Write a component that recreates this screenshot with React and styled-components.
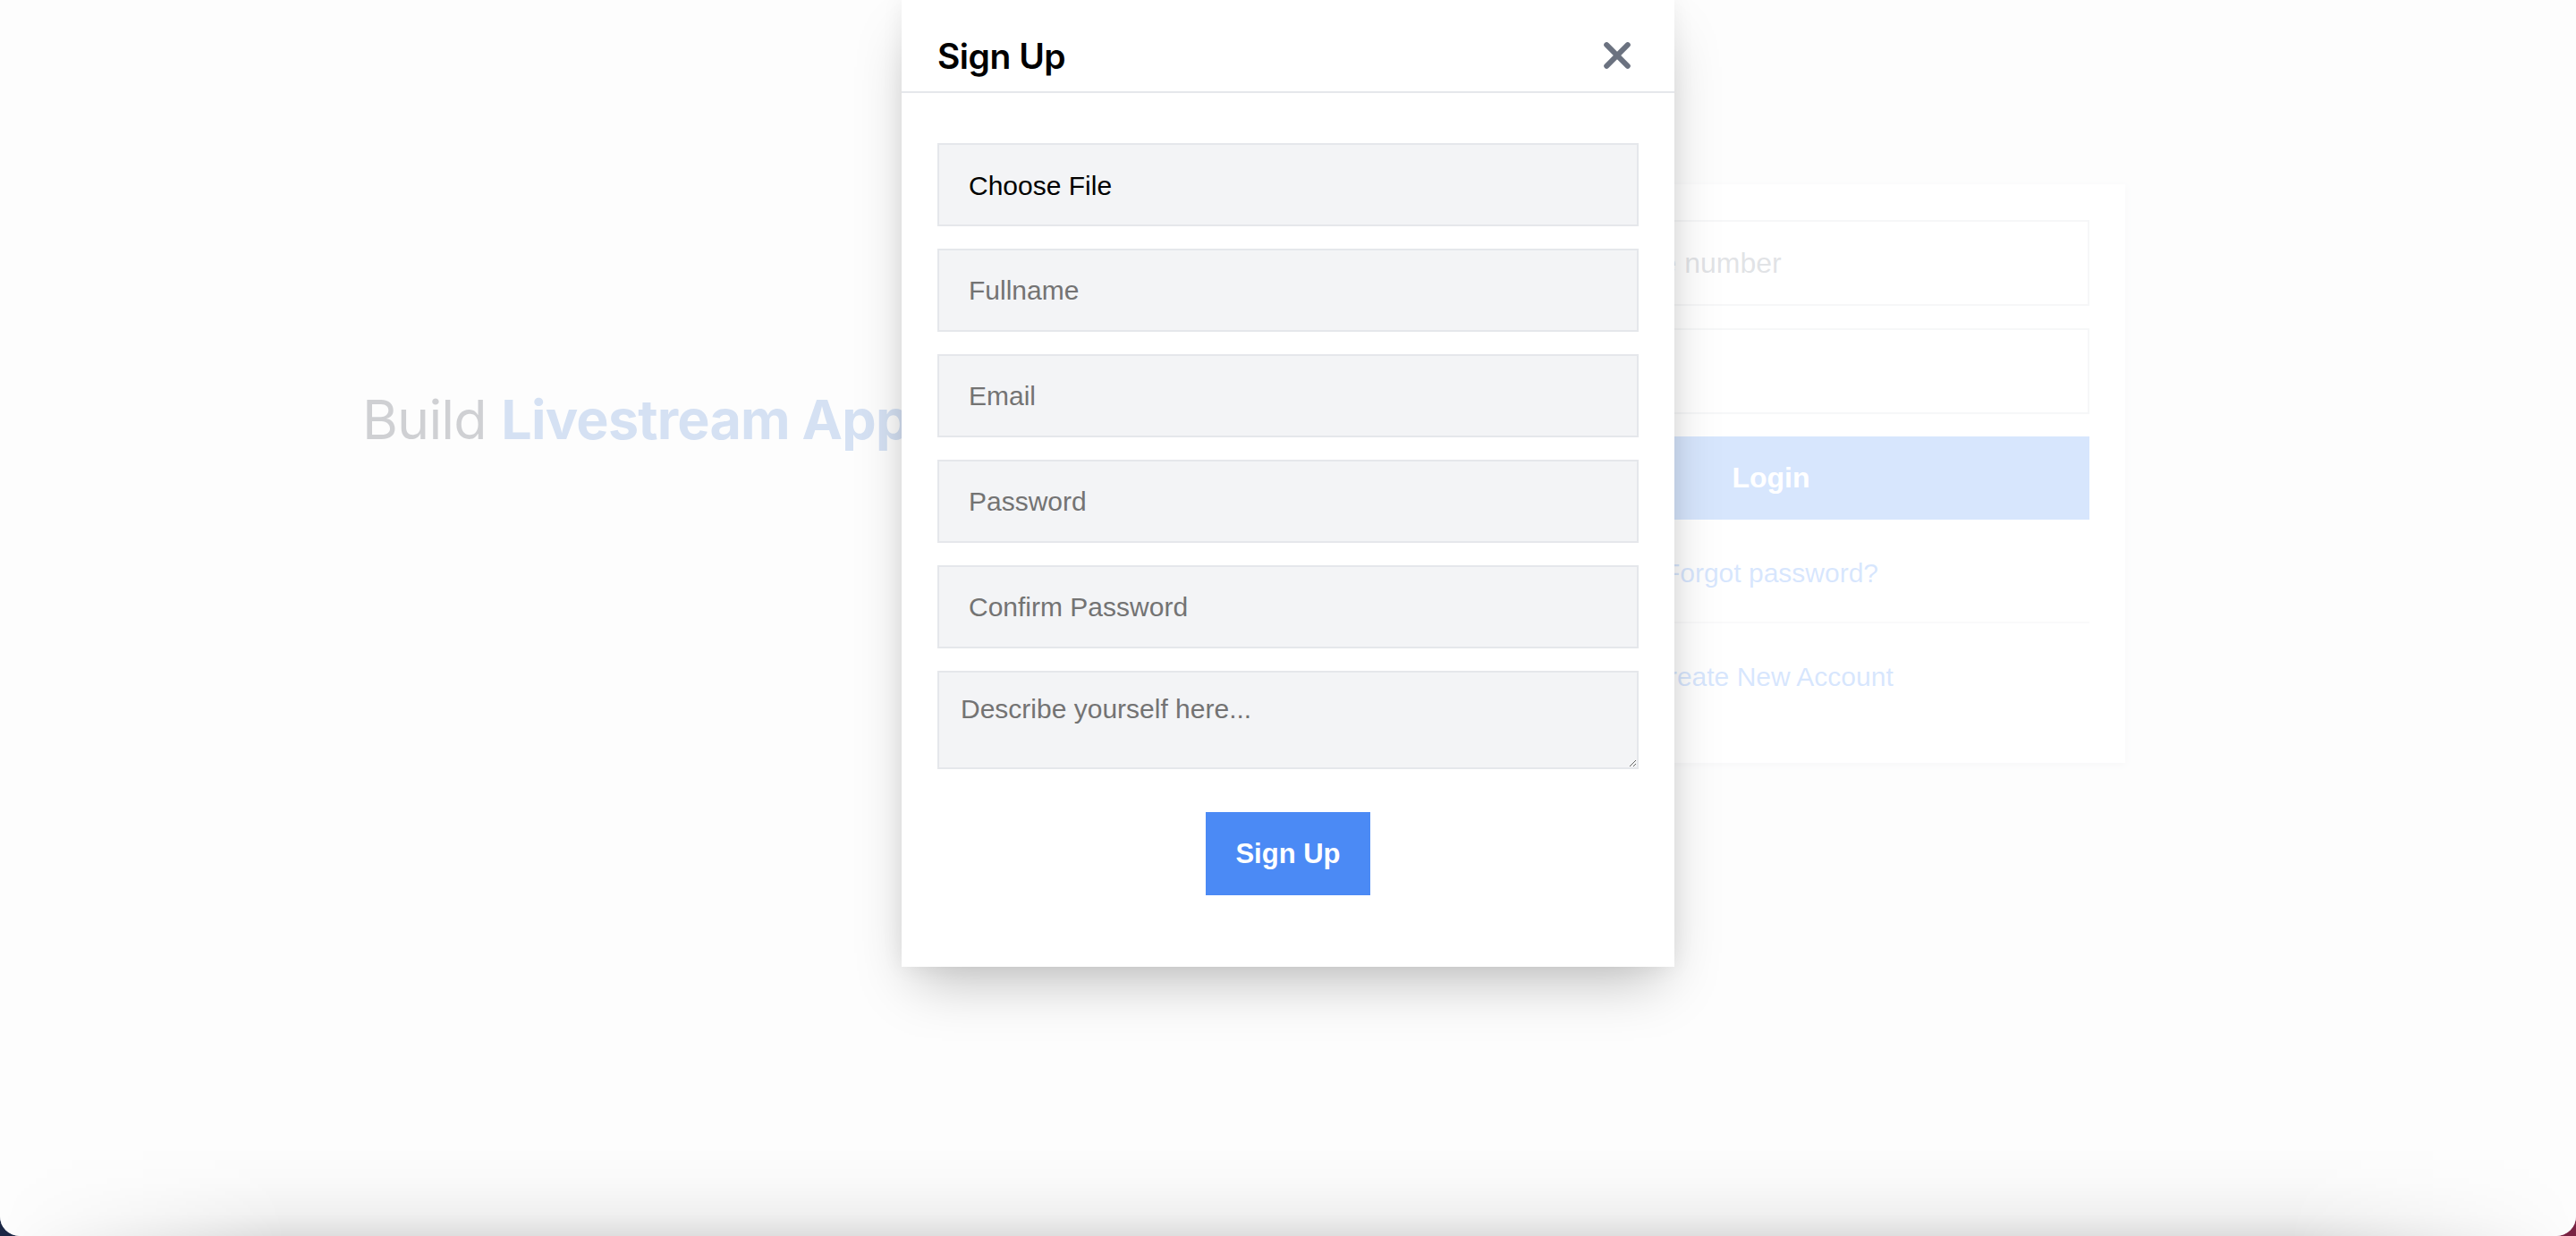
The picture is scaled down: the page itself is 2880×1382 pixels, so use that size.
import React from 'react';
import styled, { createGlobalStyle, css } from 'styled-components';

const GlobalStyle = createGlobalStyle`
  html, body {
    margin: 0;
    padding: 0;
  }
  body {
    background: linear-gradient(to right, #1b2745 0%, #1b2745 50%, #7a2343 50%, #7a2343 100%);
    font-family: "Liberation Sans", Arial, sans-serif;
    overflow: hidden;
  }
  *, *::before, *::after {
    box-sizing: border-box;
  }
`;

const Window = styled.div`
  position: relative;
  width: 2880px;
  height: 1382px;
  border-radius: 0 0 22px 22px;
  overflow: hidden;
  background: #f3f4f6;
`;

/* ---------- underlying landing page ---------- */

const Landing = styled.main`
  display: flex;
  align-items: flex-start;
  justify-content: space-between;
  height: 100%;
  padding: 206px 504px 0 405px;
`;

const Hero = styled.h1`
  margin: 233px 0 0;
  font-family: Inter, "Liberation Sans", sans-serif;
  font-size: 61px;
  line-height: 1;
  font-weight: 400;
  letter-spacing: -0.8px;
  color: #111827;
  white-space: nowrap;
`;

const HeroAccent = styled.span`
  font-weight: 700;
  color: #2d69c3;
`;

const LoginCard = styled.section`
  width: 792px;
  background: #fff;
  padding: 40px 40px 78px;
  box-shadow: 0 2px 8px rgba(0, 0, 0, 0.12);
  display: flex;
  flex-direction: column;
`;

const LoginInput = styled.input`
  height: 96px;
  width: 100%;
  border: 2px solid #d1d5db;
  background: #fff;
  padding: 0 33px;
  font-family: "Liberation Sans", Arial, sans-serif;
  font-size: 32px;
  margin-bottom: 25px;
  outline: none;
  &::placeholder {
    color: #6b7280;
  }
`;

const LoginButton = styled.button`
  height: 93px;
  width: 100%;
  border: none;
  background: #3b82f6;
  color: #fff;
  font-family: "Liberation Sans", Arial, sans-serif;
  font-weight: 700;
  font-size: 32px;
`;

const CardLink = styled.a`
  display: block;
  text-align: center;
  color: #3b82f6;
  font-size: 30px;
  line-height: 37px;
  margin-top: ${(p) => p.$top}px;
  text-decoration: none;
`;

const Divider = styled.hr`
  border: none;
  border-top: 2px solid #e5e7eb;
  margin: 36px 0 0;
`;

/* ---------- overlay + modal ---------- */

const Overlay = styled.div`
  position: absolute;
  inset: 0;
  background: rgba(255, 255, 255, 0.8);
  display: flex;
  justify-content: center;
  align-items: flex-start;
`;

const Modal = styled.div`
  width: 864px;
  background: #fff;
  box-shadow: 0 30px 60px -15px rgba(0, 0, 0, 0.25), 0 0 24px rgba(0, 0, 0, 0.06);
`;

const ModalHeader = styled.header`
  display: flex;
  align-items: center;
  justify-content: space-between;
  height: 104px;
  padding: 22px 49px 0 40px;
  border-bottom: 2px solid #e5e7eb;
`;

const ModalTitle = styled.h2`
  margin: 0;
  font-family: Inter, "Liberation Sans", sans-serif;
  font-weight: 600;
  font-size: 39px;
  line-height: 1;
  letter-spacing: -0.5px;
  color: #000;
`;

const CloseButton = styled.button`
  display: flex;
  padding: 0;
  border: none;
  background: none;
  cursor: pointer;
`;

const Form = styled.form`
  display: flex;
  flex-direction: column;
  gap: 25px;
  padding: 56px 40px 80px;
`;

const fieldBase = css`
  width: 100%;
  border: 2px solid #e5e7eb;
  background: #f3f4f6;
  font-family: "Liberation Sans", Arial, sans-serif;
  font-size: 30px;
  outline: none;
  &::placeholder {
    color: #737373;
  }
`;

const Field = styled.input`
  ${fieldBase};
  height: 93px;
  padding: 0 33px;
  color: #111;
`;

const FileLabel = styled.label`
  ${fieldBase};
  height: 93px;
  padding: 2px 33px 0;
  display: flex;
  align-items: center;
  color: #000;
  cursor: pointer;
`;

const HiddenFile = styled.input`
  display: none;
`;

const TextArea = styled.textarea`
  ${fieldBase};
  height: 110px;
  padding: 24px;
  resize: vertical;
`;

const Actions = styled.div`
  display: flex;
  justify-content: center;
  margin-top: 23px;
`;

const SubmitButton = styled.button`
  height: 93px;
  width: 184px;
  border: none;
  background: #4b8af5;
  color: #fff;
  font-family: "Liberation Sans", Arial, sans-serif;
  font-weight: 700;
  font-size: 31px;
  cursor: pointer;
`;

const BottomShade = styled.div`
  position: absolute;
  left: 0;
  right: 0;
  bottom: 0;
  height: 100px;
  pointer-events: none;
  background: linear-gradient(
    to top,
    rgba(0, 0, 0, 0.12) 0%,
    rgba(0, 0, 0, 0.05) 25%,
    rgba(0, 0, 0, 0.015) 60%,
    rgba(0, 0, 0, 0) 100%
  );
  -webkit-mask-image: linear-gradient(to right, transparent 0, #000 320px, #000 calc(100% - 320px), transparent 100%);
  mask-image: linear-gradient(to right, transparent 0, #000 320px, #000 calc(100% - 320px), transparent 100%);
`;

const CloseIcon = () => (
  <svg width="30" height="30" viewBox="0 0 30 30" aria-hidden="true">
    <path d="M3.2 3.2 26.8 26.8M26.8 3.2 3.2 26.8" stroke="#6b7280" strokeWidth="6" strokeLinecap="round" fill="none" />
  </svg>
);

export default function App() {
  return (
    <>
      <GlobalStyle />
      <Window>
        <Landing>
          <Hero>
            Build <HeroAccent>Livestream App</HeroAccent>
          </Hero>
          <LoginCard>
            <LoginInput placeholder="Email or phone number" />
            <LoginInput type="password" placeholder="Password" />
            <LoginButton>Login</LoginButton>
            <CardLink $top={41}>Forgot password?</CardLink>
            <Divider />
            <CardLink $top={41}>Create New Account</CardLink>
          </LoginCard>
        </Landing>
        <Overlay>
          <Modal>
            <ModalHeader>
              <ModalTitle>Sign Up</ModalTitle>
              <CloseButton type="button" aria-label="Close">
                <CloseIcon />
              </CloseButton>
            </ModalHeader>
            <Form onSubmit={(e) => e.preventDefault()}>
              <FileLabel>
                Choose File
                <HiddenFile type="file" />
              </FileLabel>
              <Field placeholder="Fullname" />
              <Field type="email" placeholder="Email" />
              <Field type="password" placeholder="Password" />
              <Field type="password" placeholder="Confirm Password" />
              <TextArea placeholder="Describe yourself here..." />
              <Actions>
                <SubmitButton type="submit">Sign Up</SubmitButton>
              </Actions>
            </Form>
          </Modal>
        </Overlay>
        <BottomShade />
      </Window>
    </>
  );
}
